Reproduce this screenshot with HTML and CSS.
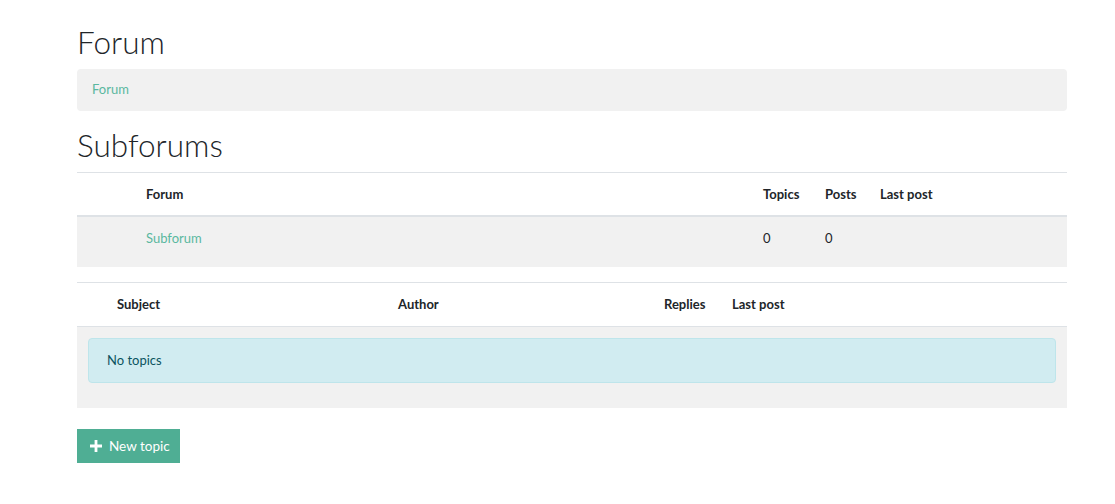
FILE: index.html
```html
<!DOCTYPE html>
<html>
<head>
<meta charset="utf-8">
<link rel="stylesheet" href="styles.css">
</head>
<body>
<div class="container">
  <h1 class="title">Forum</h1>
  <nav class="breadcrumb"><a href="#">Forum</a></nav>
  <h2 class="title sub">Subforums</h2>
  <table class="tbl forums">
    <colgroup><col class="c-icon"><col class="c-forum"><col class="c-topics"><col class="c-posts"><col></colgroup>
    <thead>
      <tr><th></th><th>Forum</th><th>Topics</th><th>Posts</th><th>Last post</th></tr>
    </thead>
    <tbody>
      <tr class="row-sub"><td></td><td><a href="#">Subforum</a></td><td>0</td><td>0</td><td></td></tr>
    </tbody>
  </table>
  <table class="tbl topics">
    <colgroup><col class="c-gap"><col class="c-subject"><col class="c-author"><col class="c-replies"><col></colgroup>
    <thead>
      <tr><th></th><th>Subject</th><th>Author</th><th>Replies</th><th>Last post</th></tr>
    </thead>
    <tbody>
      <tr><td colspan="5" class="alert-cell"><div class="alert">No topics</div></td></tr>
    </tbody>
  </table>
  <a href="#" class="btn"><svg width="12" height="12" viewBox="0 0 12 12"><path d="M4.6 0h2.8v4.6H12v2.8H7.4V12H4.6V7.4H0V4.6h4.6z" fill="#fff"/></svg>New topic</a>
</div>
</body>
</html>
```
FILE: styles.css
```css
body {
  margin: 0;
  font-family: Lato, "Liberation Sans", sans-serif;
  font-size: 13px;
  line-height: 20px;
  color: #212529;
  background: #fff;
}
a { color: #5ab89f; text-decoration: none; }
.container {
  width: 990px;
  margin-left: 77px;
  padding-top: 22px;
}
.title {
  margin: 0;
  font-weight: 300;
  font-size: 31.5px;
  line-height: 40px;
  color: #212529;
}
.breadcrumb {
  margin-top: 7px;
  background: #f1f1f1;
  border-radius: 4px;
  padding: 10px 15px 12px;
  font-size: 13px;
}
.sub { margin-top: 14px; margin-bottom: 7px; }
.tbl {
  width: 100%;
  border-collapse: collapse;
  border-top: 1px solid #dee2e6;
  table-layout: fixed;
}
.tbl th {
  text-align: left;
  font-weight: 700;
  padding: 11px 12px;
  border-bottom: 2px solid #dee2e6;
}
.tbl td { padding: 11px 12px 19px; }
.tbl tbody { background: #f1f1f1; }
.c-icon { width: 57px; }
.c-forum { width: 617px; }
.c-topics { width: 62px; }
.c-posts { width: 55px; }
.topics { margin-top: 15px; }
.topics th { border-bottom-width: 1px; padding-bottom: 12px; }
.c-gap { width: 28px; }
.c-subject { width: 281px; }
.c-author { width: 266px; }
.c-replies { width: 68px; }
.tbl td.alert-cell { padding: 11px 11px 25px; }
.alert {
  background: #d1ecf1;
  border: 1px solid #bee5eb;
  border-radius: 4px;
  color: #0c5460;
  padding: 11px 18px 12px;
}
.btn {
  display: inline-flex;
  align-items: center;
  gap: 7px;
  margin-top: 21px;
  background: #4fae94;
  color: #fff;
  padding: 7px 10px 7px 13px;
  height: 34px;
  box-sizing: border-box;
  font-size: 13.5px;
}
```
